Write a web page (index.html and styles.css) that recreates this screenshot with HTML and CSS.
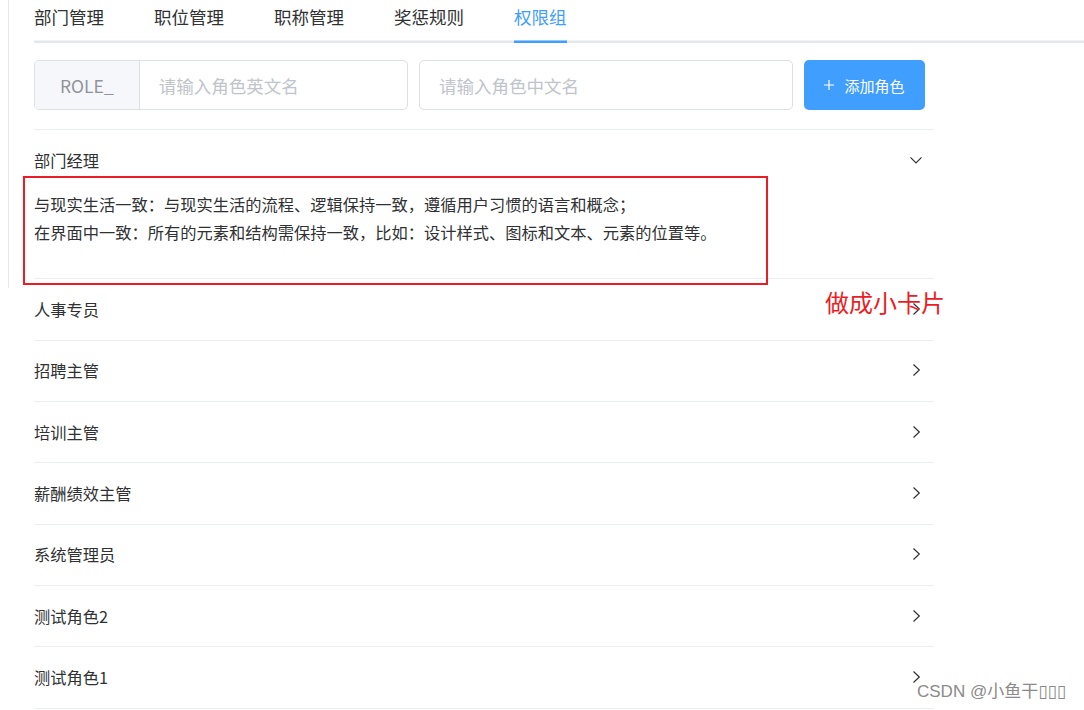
FILE: index.html
```html
<!DOCTYPE html>
<html lang="zh-CN">
<head>
<meta charset="utf-8">
<title>权限组</title>
<link rel="stylesheet" href="styles.css">
</head>
<body>
<div class="page">
  <div class="tabs-header">
    <div class="tab"><span class="tab-label">部门管理</span></div>
    <div class="tab"><span class="tab-label">职位管理</span></div>
    <div class="tab"><span class="tab-label">职称管理</span></div>
    <div class="tab"><span class="tab-label">奖惩规则</span></div>
    <div class="tab active"><span class="tab-label">权限组</span></div>
  </div>

  <div class="toolbar">
    <div class="input-group">
      <div class="prepend">ROLE_</div>
      <input class="field" type="text" placeholder="请输入角色英文名">
    </div>
    <div class="input">
      <input class="field" type="text" placeholder="请输入角色中文名">
    </div>
    <button class="btn" type="button">
      <svg class="plus" width="10" height="10" viewBox="0 0 10 10"><path d="M5 0V10M0 5H10" stroke="#fff" stroke-width="1.2" fill="none"/></svg>
      <span>添加角色</span>
    </button>
  </div>

  <div class="collapse">
    <div class="item open">
      <div class="item-header">
        <span>部门经理</span>
        <svg class="arrow" width="12" height="12" viewBox="0 0 12 12"><polyline points="0.5,3.3 6,8.8 11.5,3.3" fill="none" stroke="#303133" stroke-width="1.2"/></svg>
      </div>
      <div class="item-content">
        <div>与现实生活一致：与现实生活的流程、逻辑保持一致，遵循用户习惯的语言和概念；</div>
        <div>在界面中一致：所有的元素和结构需保持一致，比如：设计样式、图标和文本、元素的位置等。</div>
      </div>
    </div>
    <div class="item">
      <div class="item-header"><span>人事专员</span><svg class="arrow" width="12" height="12" viewBox="0 0 12 12"><polyline points="3.5,0.5 9.3,6 3.5,11.5" fill="none" stroke="#303133" stroke-width="1.2"/></svg></div>
    </div>
    <div class="item">
      <div class="item-header"><span>招聘主管</span><svg class="arrow" width="12" height="12" viewBox="0 0 12 12"><polyline points="3.5,0.5 9.3,6 3.5,11.5" fill="none" stroke="#303133" stroke-width="1.2"/></svg></div>
    </div>
    <div class="item">
      <div class="item-header"><span>培训主管</span><svg class="arrow" width="12" height="12" viewBox="0 0 12 12"><polyline points="3.5,0.5 9.3,6 3.5,11.5" fill="none" stroke="#303133" stroke-width="1.2"/></svg></div>
    </div>
    <div class="item">
      <div class="item-header"><span>薪酬绩效主管</span><svg class="arrow" width="12" height="12" viewBox="0 0 12 12"><polyline points="3.5,0.5 9.3,6 3.5,11.5" fill="none" stroke="#303133" stroke-width="1.2"/></svg></div>
    </div>
    <div class="item">
      <div class="item-header"><span>系统管理员</span><svg class="arrow" width="12" height="12" viewBox="0 0 12 12"><polyline points="3.5,0.5 9.3,6 3.5,11.5" fill="none" stroke="#303133" stroke-width="1.2"/></svg></div>
    </div>
    <div class="item">
      <div class="item-header"><span>测试角色2</span><svg class="arrow" width="12" height="12" viewBox="0 0 12 12"><polyline points="3.5,0.5 9.3,6 3.5,11.5" fill="none" stroke="#303133" stroke-width="1.2"/></svg></div>
    </div>
    <div class="item">
      <div class="item-header"><span>测试角色1</span><svg class="arrow" width="12" height="12" viewBox="0 0 12 12"><polyline points="3.5,0.5 9.3,6 3.5,11.5" fill="none" stroke="#303133" stroke-width="1.2"/></svg></div>
    </div>
  </div>

  <div class="annot-box"></div>
  <div class="annot-text">做成小卡片</div>
  <div class="watermark">CSDN @小鱼干▯▯▯</div>
</div>
</body>
</html>
```

FILE: styles.css
```css
* {
  box-sizing: border-box;
  margin: 0;
  padding: 0;
}

html, body {
  background: #fff;
}

body {
  font-family: "Noto Sans CJK SC", "Noto Sans", sans-serif;
  color: #303133;
}

.page {
  position: relative;
  padding-left: 34px;
  height: 710px;
  overflow: hidden;
}

.page::before {
  content: "";
  position: absolute;
  left: 8px;
  top: 0;
  width: 1px;
  height: 288px;
  background: #e4e7ed;
}

/* tabs */
.tabs-header {
  display: flex;
  height: 42.5px;
  box-shadow: inset 0 -2.5px 0 #e4e7ed;
}

.tab {
  display: flex;
  padding: 0 25px;
  height: 42.5px;
  font-size: 17.5px;
  line-height: 34px;
  color: #303133;
}

.tab:first-child {
  padding-left: 0;
}

.tab:last-child {
  padding-right: 0;
}

.tab-label {
  display: block;
  height: 100%;
}

.tab.active {
  color: #409eff;
}

.tab.active .tab-label {
  box-shadow: inset 0 -2.5px 0 #409eff;
}

/* toolbar */
.toolbar {
  display: flex;
  gap: 11px;
  margin-top: 17.5px;
  height: 50px;
}

.input-group,
.input {
  display: flex;
  width: 374px;
  height: 50px;
  border: 1px solid #dcdfe6;
  border-radius: 5px;
  overflow: hidden;
}

.prepend {
  display: flex;
  align-items: center;
  padding: 0 25px;
  background: #f5f7fa;
  color: #909399;
  font-size: 17.5px;
  border-right: 1px solid #dcdfe6;
}

.field {
  flex: 1;
  min-width: 0;
  border: 0;
  outline: 0;
  padding: 0 19px;
  font-size: 17.5px;
  font-family: inherit;
  color: #606266;
  background: transparent;
}

.field::placeholder {
  color: #c0c4cc;
}

.btn {
  display: flex;
  align-items: center;
  justify-content: center;
  gap: 10px;
  width: 121px;
  height: 50px;
  border: 0;
  border-radius: 5px;
  background: #409eff;
  color: #fff;
  font-size: 15px;
  font-family: inherit;
}

/* collapse */
.collapse {
  width: 900px;
  margin-top: 19px;
  border-top: 1px solid #ebeef5;
}

.item-header {
  display: flex;
  align-items: center;
  justify-content: space-between;
  height: 61.33px;
  padding-right: 12px;
  padding-bottom: 1px;
  border-bottom: 1px solid #ebeef5;
  font-size: 16.25px;
  color: #303133;
}

.item.open .item-header {
  height: 60.33px;
  border-bottom: 0;
  padding-bottom: 1px;
}

.arrow {
  display: block;
}

.item-content {
  font-size: 16.25px;
  line-height: 28px;
  color: #303133;
  padding-bottom: 32px;
  border-bottom: 1px solid #ebeef5;
}

/* annotations over the screenshot */
.annot-box {
  position: absolute;
  left: 23px;
  top: 176px;
  width: 745px;
  height: 109px;
  border: 2.5px solid #ed1c24;
}

.annot-text {
  position: absolute;
  left: 825px;
  top: 290px;
  font-size: 24px;
  line-height: 24px;
  color: #ed1c24;
  white-space: nowrap;
}

.watermark {
  position: absolute;
  left: 917px;
  top: 682px;
  font-family: "Liberation Sans", "Noto Sans CJK SC", "DejaVu Sans", sans-serif;
  font-size: 17px;
  line-height: 20px;
  color: #8a8a8a;
  white-space: nowrap;
  text-shadow: 0 0 2px rgba(255, 255, 255, 0.9);
}
```
